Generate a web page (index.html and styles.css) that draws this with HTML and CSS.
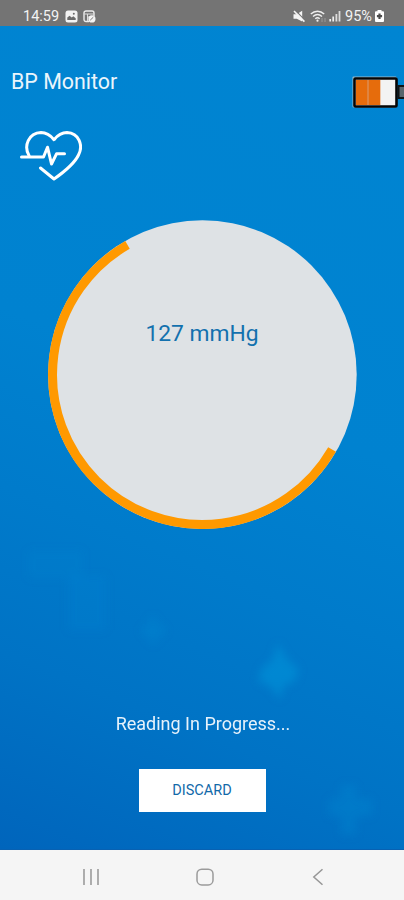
FILE: index.html
```html
<!doctype html>
<html lang="en">
  <head>
    <meta charset="UTF-8" />
    <meta name="viewport" content="width=device-width, initial-scale=1.0" />
    <title>BP Monitor</title>
    <link rel="stylesheet" href="styles.css">
  </head>
  <body>
    <div class="status-bar">
      <span class="clock">14:59</span>
      <svg class="status-icon" width="13" height="13" viewBox="0 0 13 13">
        <rect x="0.5" y="0.5" width="12" height="12" rx="2.5" fill="#f3f3f3" />
        <path d="M2.3 10V7.6l2.3-1.9 2.1 1.8 1.6-1.3 2.4 2V10z" fill="#6c6c6c" />
        <circle cx="8.8" cy="3.8" r="1" fill="#6c6c6c" />
      </svg>
      <svg class="status-icon" width="13" height="13" viewBox="0 0 13 13">
        <path d="M6 11.5H3A2 2 0 0 1 1 9.5V3a2 2 0 0 1 2-2h6a2 2 0 0 1 2 2v3" fill="none" stroke="#ececec" stroke-width="1.4" />
        <path d="M1 4h10M4.5 4v7M4.5 7H7" stroke="#dcdcdc" />
        <circle cx="8.9" cy="8.9" r="3.6" fill="#f3f3f3" />
        <path d="M7.2 10.2l3.1-3" stroke="#777" />
      </svg>
      <span class="spacer"></span>
      <svg class="mute" width="12" height="13" viewBox="0 0 12 13">
        <path d="M0.5 4.2h3.2L9.200 0.8v10.800L3.700 8.800H0.500z" fill="#f5f5f5" />
        <path d="M2.500 0.500l9.500 9.800" stroke="#747474" stroke-width="1.200" />
        <path d="M1 1l10.400 10.600" stroke="#f5f5f5" stroke-width="1.600" />
      </svg>
      <svg class="wifi" width="18" height="13" viewBox="0 0 18 13">
        <path d="M0.8 4.1c4-3.9 9.4-3.9 13.4 0M3 6.5c2.7-2.5 6.3-2.5 9 0M5.3 8.8c1.3-1.2 3.1-1.2 4.4 0" fill="none" stroke="#efefef" stroke-width="1.4" />
        <circle cx="7.5" cy="10.7" r="1.1" fill="#efefef" />
        <path d="M12 8v4M15 8v4" stroke="#999" />
      </svg>
      <svg class="signal" width="12" height="12" viewBox="0 0 12 12">
        <path d="M1.2 9v2.5M4.2 6.5v5" stroke="#eee" stroke-width="1.7" />
        <path d="M7.4 4v7.5M10.5 1v10.5" stroke="#ddd" stroke-width="1.8" />
      </svg>
      <span class="percent">95%</span>
      <svg width="9" height="12" viewBox="0 0 9 12">
        <path d="M2.5 0h4v1.2H8q1 0 1 1V11q0 1-1 1H1q-1 0-1-1V2.2q0-1 1-1h1.5z" fill="#fff" />
        <path d="M4.5 3.5v5.4M1.9 6.2h5.2" stroke="#4c4c4c" stroke-width="2.2" />
      </svg>
    </div>

    <main class="monitor">
      <svg class="backdrop" viewBox="0 0 404 824" preserveAspectRatio="none">
        <defs>
          <filter id="soft"><feGaussianBlur stdDeviation="4" /></filter>
        </defs>
        <g fill="#0098dc" filter="url(#soft)">
          <path d="M278 618l9 16 12 10-5 13-10 3-4 14-9-12-13-7 4-12 10-8z" opacity="0.5" />
          <path d="M341 760h15v14h16v17h-16v19h-15v-19h-12v-17h12z" opacity="0.22" />
          <path d="M149 592h8v9h8v9h-8v8h-8v-8h-7v-9h7z" opacity="0.2" />
          <path d="M68 550h38v55H68z" opacity="0.12" />
          <path d="M28 525h55v28H28z" opacity="0.1" />
        </g>
      </svg>

      <header class="header">
        <h1>BP Monitor</h1>
        <svg class="battery" width="52" height="32" viewBox="0 0 52 32">
          <rect x="0.5" y="0.5" width="44" height="31" rx="1" fill="#98b9c9" />
          <rect x="2.5" y="2.5" width="42" height="28" rx="1" fill="#f3f3f3" stroke="#050505" stroke-width="2.6" />
          <path d="M4 4h24v25H4z" fill="#e66c0c" />
          <path d="M16 4v25" stroke="#d99c74" />
          <path d="M28.5 4v25" stroke="#efc6a8" />
          <rect x="46.5" y="10" width="7" height="12" fill="#58656d" stroke="#101416" stroke-width="2" />
        </svg>
      </header>

      <svg class="heart" width="62" height="52" viewBox="0 0 62 52" fill="none" stroke="#fff" stroke-width="3" stroke-linecap="round" stroke-linejoin="round">
        <path d="M9 25.5C3.5 16 8.5 3 21 2.5c5.500 0 9.500 2.800 13 7.200 3.500-4.400 7.500-7.200 13-7.200 12 .5 16.500 13 11.500 22.500C54 34.500 44 42 34 49L20.500 38" />
        <path d="M1.500 27h22l4-9.800 4 16.800 5-10.200h8" />
      </svg>

      <div class="dial">
        <svg class="ring" viewBox="0 0 310 310">
          <circle cx="155.400" cy="155.600" r="154.300" fill="#dee2e5" />
          <path d="M285.100 230.500A149.800 149.800 0 1 1 80.500 25.900" fill="none" stroke="#ff9900" stroke-width="9" />
        </svg>
        <span class="reading">127 mmHg</span>
      </div>

      <p class="progress">Reading In Progress...</p>
      <button type="button" class="discard">DISCARD</button>
    </main>

    <nav class="nav-bar">
      <svg width="18" height="18" viewBox="0 0 18 18" stroke="#a0a0a0" stroke-width="1.700">
        <path d="M2 1v16M9 1v16M16 1v16" />
      </svg>
      <svg width="18" height="18" viewBox="0 0 18 18">
        <rect x="1" y="1.200" width="16" height="15.800" rx="4.800" fill="none" stroke="#9b9b9b" stroke-width="1.500" />
      </svg>
      <svg width="18" height="18" viewBox="0 0 18 18">
        <path d="M13.500 1.200L4.800 9l8.700 7.800" fill="none" stroke="#969696" stroke-width="1.500" />
      </svg>
    </nav>
  </body>
</html>
```

FILE: styles.css
```css
* {
  box-sizing: border-box;
}
body {
  margin: 0;
  height: 900px;
  display: flex;
  flex-direction: column;
  overflow: hidden;
  font-family: Roboto, Arial, sans-serif;
}
.status-bar {
  height: 26px;
  padding: 6px 20px 0 23px;
  display: flex;
  align-items: center;
  background: #747474;
  color: #f3f3f3;
  font-size: 14px;
}
.clock {
  width: 42px;
  font-size: 14.5px;
}
.status-icon {
  margin-right: 5px;
}
.spacer {
  flex: 1;
}
.mute {
  margin-right: 5px;
}
.wifi {
  margin-right: 1px;
}
.signal {
  margin-right: 4px;
}
.percent {
  width: 30px;
  font-size: 14.5px;
}
.monitor {
  position: relative;
  height: 824px;
  display: flex;
  flex-direction: column;
  align-items: center;
  background: linear-gradient(202deg, #0085d2 0%, #0082d0 45%, #007bcb 63%, #0073c5 80%, #0065bc 100%);
  border-bottom: 1px solid #0861b2;
}
.backdrop {
  position: absolute;
  top: 0;
  left: 0;
  width: 100%;
  height: 100%;
}
.header,
.heart,
.dial,
.progress,
.discard {
  position: relative;
}
.header {
  width: 100%;
  height: 84px;
  padding: 40px 0 0 11px;
  display: flex;
  justify-content: space-between;
  align-items: flex-start;
}
.header h1 {
  margin: 0;
  font-size: 21.4px;
  line-height: 31px;
  font-weight: 400;
  color: #eaf5fc;
}
.battery {
  margin-top: 10px;
}
.heart {
  align-self: flex-start;
  margin: 20px 0 0 20px;
}
.dial {
  width: 310px;
  height: 310px;
  margin-top: 37px;
  display: grid;
  justify-items: center;
}
.ring {
  grid-area: 1 / 1;
  width: 310px;
  height: 310px;
}
.reading {
  grid-area: 1 / 1;
  padding-top: 101px;
  font-size: 22.8px;
  line-height: 28px;
  color: #1371ae;
}
.progress {
  margin: 183px 0 0;
  padding-left: 2px;
  font-size: 18px;
  line-height: 24px;
  color: #e6f2fb;
}
.discard {
  width: 127px;
  height: 43px;
  margin-top: 33px;
  padding: 0;
  border: none;
  background: #fff;
  color: #1269a9;
  font-family: inherit;
  font-size: 14.5px;
}
.nav-bar {
  height: 50px;
  padding: 4px 77px 0 82px;
  display: flex;
  justify-content: space-between;
  align-items: center;
  background: #f5f5f5;
}
```
